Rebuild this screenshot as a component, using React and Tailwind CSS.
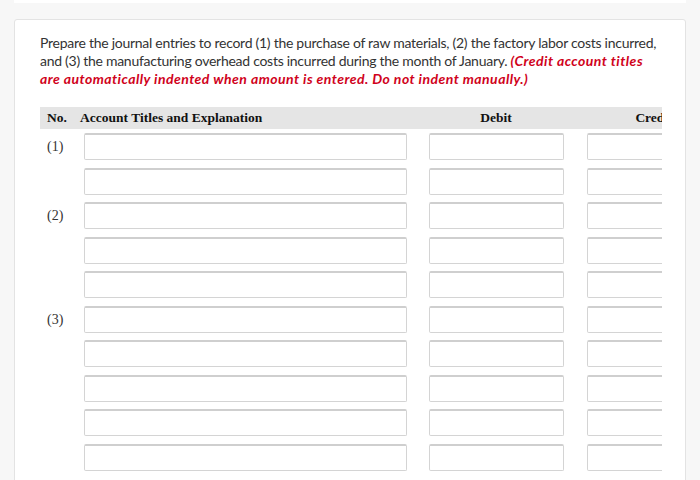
import React from "react";

const rows = [
  { label: "(1)" },
  { label: "" },
  { label: "(2)" },
  { label: "" },
  { label: "" },
  { label: "(3)" },
  { label: "" },
  { label: "" },
  { label: "" },
  { label: "" },
];

const Field = ({ className }) => (
  <div
    className={
      "h-[27px] bg-white border border-[#d4d4d4] border-t-[2px] border-t-[#cfcfcf] rounded-[2px] " +
      className
    }
  />
);

const App = () => (
  <div className="w-[700px] h-[480px] overflow-hidden bg-[#f7f7f7] font-['Lato','Open_Sans',sans-serif]">
    <div className="mx-[14px] h-[3px] bg-white" />
    <div className="mx-[14px] mt-[16px] bg-white border border-[#e3e3e3] rounded-[3px] pl-[25px] pr-[20px] pt-[14px] h-[520px]">
      <p className="text-[14px] leading-[18px] text-[#333] tracking-[-0.27px]">
        Prepare the journal entries to record (1) the purchase of raw materials, (2) the factory labor costs incurred,
        and (3) the manufacturing overhead costs incurred during the month of January.{" "}
        <span className="text-[#d0021b] italic font-bold tracking-[0.45px]">
          (Credit account titles are automatically indented when amount is entered. Do not indent manually.)
        </span>
      </p>

      <div className="mt-[19px] w-[622px] overflow-hidden font-['Liberation_Serif',serif]">
        <div className="flex items-center h-[22px] bg-[#e5e5e5] text-[13.5px] font-bold text-[#111] w-[700px]">
          <div className="w-[40px] pl-[7px]">No.</div>
          <div className="w-[349px]">Account Titles and Explanation</div>
          <div className="w-[134px] text-center">Debit</div>
          <div className="w-[24px]" />
          <div className="w-[134px] text-center">Credit</div>
        </div>
        <div className="flex flex-col gap-[7.5px] pt-[4px] w-[700px]">
          {rows.map((r, i) => (
            <div key={i} className="flex items-center">
              <div className="w-[44px] pl-[7px] text-[14px] text-[#333]">{r.label}</div>
              <Field className="w-[323px]" />
              <div className="w-[22px]" />
              <Field className="w-[135px]" />
              <div className="w-[23px]" />
              <Field className="w-[135px]" />
            </div>
          ))}
        </div>
      </div>
    </div>
  </div>
);

export default App;
